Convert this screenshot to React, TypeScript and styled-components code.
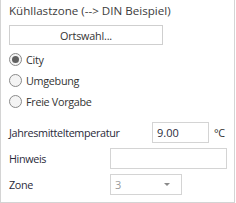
import React from "react";
import styled, { createGlobalStyle } from "styled-components";

const GlobalStyle = createGlobalStyle`
    html, body {
        margin: 0;
        padding: 0;
        background: #ffffff;
    }
    body {
        font-family: "Open Sans", "Liberation Sans", sans-serif;
        color: #333333;
    }
`;

const Panel = styled.section`
    width: 235px;
    height: 203px;
    border: 1px solid #d4d4d4;
    border-top: none;
    background: #ffffff;
    padding: 0 0 0 8px;
    box-sizing: border-box;
    display: flex;
    flex-direction: column;
`;

const Title = styled.h1`
    margin: 0;
    height: 24px;
    line-height: 22px;
    font-size: 11.6px;
    font-weight: 400;
    color: #3c3c3c;
`;

const PushButton = styled.button`
    width: 154px;
    height: 20px;
    margin: 1px 0 0 0;
    padding: 0;
    border: 1px solid #cfcfcf;
    background: #ffffff;
    font-family: inherit;
    font-size: 10.8px;
    letter-spacing: -0.2px;
    color: #333333;
`;

const RadioGroup = styled.div`
    display: flex;
    flex-direction: column;
    gap: 8px;
    margin-top: 8px;
`;

const RadioRow = styled.label`
    display: flex;
    align-items: center;
    gap: 4px;
    height: 13px;
    font-size: 10.8px;
    letter-spacing: -0.3px;
    color: #333333;
`;

const RadioCircle = styled.span<{ $checked?: boolean }>`
    width: 11px;
    height: 11px;
    border: 1px solid #8a8a8a;
    border-radius: 50%;
    background: #f4f4f4;
    display: flex;
    align-items: center;
    justify-content: center;

    &::after {
        content: "";
        width: 7px;
        height: 7px;
        border-radius: 50%;
        background: ${({ $checked }) => ($checked ? "#606060" : "transparent")};
    }
`;

const Fields = styled.div`
    display: flex;
    flex-direction: column;
    gap: 5px;
    margin-top: 14px;
`;

const FieldRow = styled.div`
    display: flex;
    align-items: center;
    height: 21px;
    font-size: 10.8px;
    letter-spacing: -0.35px;
`;

const FieldLabel = styled.span<{ $width: number }>`
    width: ${({ $width }) => $width}px;
    flex: none;
    color: #2a2a3a;
`;

const TextBox = styled.div<{ $width: number; $muted?: boolean }>`
    width: ${({ $width }) => $width}px;
    height: 21px;
    box-sizing: border-box;
    border: 1px solid #d4d4d4;
    background: #ffffff;
    padding: 0 4px;
    display: flex;
    align-items: center;
    justify-content: space-between;
    font-size: 11px;
    letter-spacing: 0;
    color: ${({ $muted }) => ($muted ? "#9a9a9a" : "#2a2a3a")};
`;

const Unit = styled.span`
    margin-left: 5px;
    font-size: 10.8px;
    color: #333333;
`;

const Caret = styled.span`
    width: 0;
    height: 0;
    border-left: 3px solid transparent;
    border-right: 3px solid transparent;
    border-top: 3px solid #8a8a8a;
    margin-right: 7px;
`;

const App: React.FC = () => {
    return (
        <>
            <GlobalStyle />
            <Panel>
                <Title>Kühllastzone (--&gt; DIN Beispiel)</Title>
                <PushButton>Ortswahl...</PushButton>

                <RadioGroup>
                    <RadioRow>
                        <RadioCircle $checked />
                        City
                    </RadioRow>
                    <RadioRow>
                        <RadioCircle />
                        Umgebung
                    </RadioRow>
                    <RadioRow>
                        <RadioCircle />
                        Freie Vorgabe
                    </RadioRow>
                </RadioGroup>

                <Fields>
                    <FieldRow>
                        <FieldLabel $width={143}>Jahresmitteltemperatur</FieldLabel>
                        <TextBox $width={57}>9.00</TextBox>
                        <Unit>°C</Unit>
                    </FieldRow>
                    <FieldRow>
                        <FieldLabel $width={101}>Hinweis</FieldLabel>
                        <TextBox $width={117} />
                    </FieldRow>
                    <FieldRow>
                        <FieldLabel $width={101}>Zone</FieldLabel>
                        <TextBox $width={72} $muted>
                            3
                            <Caret />
                        </TextBox>
                    </FieldRow>
                </Fields>
            </Panel>
        </>
    );
};

export default App;
